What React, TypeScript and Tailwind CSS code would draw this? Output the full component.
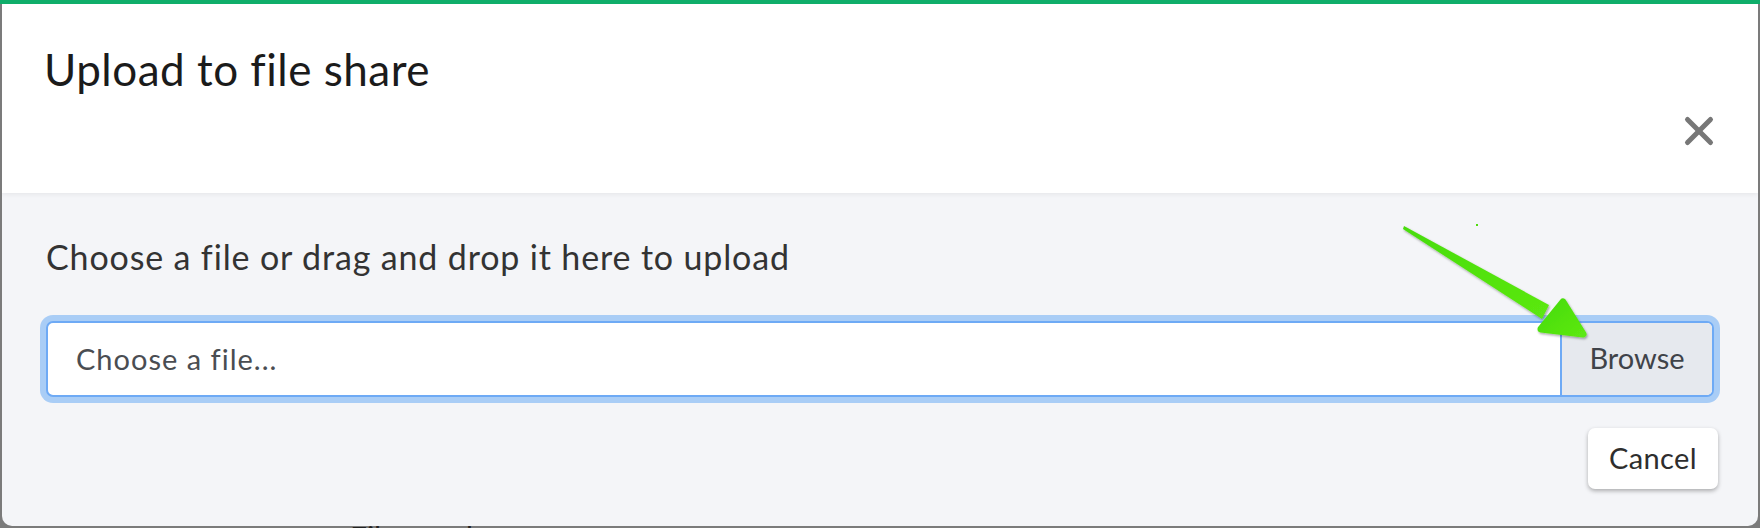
import { X } from "lucide-react";

const font = { fontFamily: "Lato, 'Open Sans', sans-serif" };

const Arrow = () => {
  return (
    <svg
      className="pointer-events-none absolute left-0 top-0"
      width="1760"
      height="528"
      viewBox="0 0 1760 528"
    >
      <defs>
        <linearGradient id="arrowFill" x1="0" y1="0" x2="1" y2="1">
          <stop offset="0" stopColor="#47dc0a" />
          <stop offset="1" stopColor="#5ce812" />
        </linearGradient>
        <filter id="arrowShadow" x="-10%" y="-10%" width="130%" height="130%">
          <feDropShadow dx="1" dy="1.5" stdDeviation="0.8" floodColor="#000" floodOpacity="0.35" />
        </filter>
      </defs>
      <g filter="url(#arrowShadow)" fill="url(#arrowFill)">
        <polygon points="1404,226 1549,305 1542,319 1403,229" />
        <polygon
          points="1563,302 1583,334 1541,329"
          stroke="url(#arrowFill)"
          strokeWidth="7"
          strokeLinejoin="round"
        />
      </g>
      <rect x="1476" y="224" width="2" height="2" fill="#4fdc0c" />
    </svg>
  );
};

export default function App() {
  return (
    <div className="relative h-[528px] w-[1760px] overflow-hidden bg-[#7b7b7b]" style={font}>
      <div className="h-[4px] w-full bg-[#0fae6a]" />
      <div className="mx-[2px] flex h-[522px] flex-col overflow-hidden rounded-b-[10px] bg-[#f4f5f8]">
        <div className="relative z-10 flex h-[189px] items-start justify-between bg-white shadow-[0_1px_5px_rgba(0,0,0,0.07)]">
          <h1 className="pl-[42px] pt-[39px] text-[44px] font-normal leading-[52px] tracking-[0.5px] text-[#1b1b1b]">
            Upload to file share
          </h1>
          <button className="mr-[36px] mt-[104px] text-[#777777]">
            <X size={46} strokeWidth={2.6} />
          </button>
        </div>
        <div className="flex flex-col pl-[44px] pr-[44px] pt-[44px]">
          <p className="text-[34px] leading-[40px] tracking-[0.85px] text-[#333333]">
            Choose a file or drag and drop it here to upload
          </p>
          <div className="mt-[44px] flex h-[76px] overflow-hidden rounded-[7px] border-2 border-[#6eaaf5] bg-white shadow-[0_0_0_6px_#a9cdf6]">
            <div className="flex flex-1 items-center pl-[28px] text-[29px] tracking-[1px] text-[#4a4d52]">
              Choose a file...
            </div>
            <div className="flex w-[152px] items-center justify-center border-l-2 border-[#6eaaf5] bg-[#e6e9ee] pb-[3px] text-[29px] text-[#3f4349]">
              Browse
            </div>
          </div>
          <div className="mt-[31px] flex justify-end">
            <button className="-mr-[4px] h-[61px] w-[130px] rounded-[7px] bg-white pb-[2px] text-[29px] tracking-[0.4px] text-[#2e2e2e] shadow-[0_2px_4px_rgba(0,0,0,0.3)]">
              Cancel
            </button>
          </div>
        </div>
      </div>
      <div className="-mt-[4px] pl-[350px] text-[30px] leading-none text-[#222222]">Files to share</div>
      <Arrow />
    </div>
  );
}
